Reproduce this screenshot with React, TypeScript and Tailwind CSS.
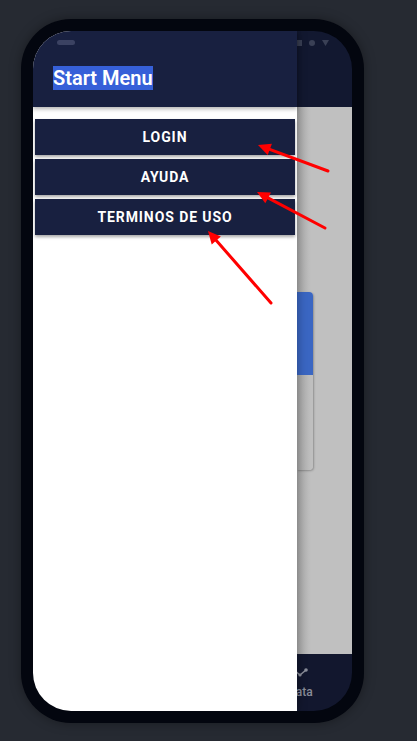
import React from "react";

const items = ["LOGIN", "AYUDA", "TERMINOS DE USO"];

function Arrow({ x1, y1, x2, y2 }: { x1: number; y1: number; x2: number; y2: number }) {
  // tail (x1,y1) -> tip (x2,y2)
  const a = Math.atan2(y2 - y1, x2 - x1);
  const len = 14;
  const w = 0.45;
  const p1 = [x2 - len * Math.cos(a - w), y2 - len * Math.sin(a - w)];
  const p2 = [x2 - len * Math.cos(a + w), y2 - len * Math.sin(a + w)];
  return (
    <g>
      <line x1={x1} y1={y1} x2={x2 - 6 * Math.cos(a)} y2={y2 - 6 * Math.sin(a)} stroke="#ff0000" strokeWidth={3} strokeLinecap="round" />
      <polygon points={`${x2},${y2} ${p1[0]},${p1[1]} ${p2[0]},${p2[1]}`} fill="#ff0000" />
    </g>
  );
}

export default function App() {
  return (
    <div className="relative w-[417px] h-[741px] bg-[#262a32] overflow-hidden font-['Roboto','Liberation_Sans',sans-serif]">
      <div className="pl-[21px] pt-[19px]">
        <div className="w-[343px] h-[704px] rounded-[50px] bg-[#03060f] p-[12px] shadow-[0_0_12px_rgba(0,0,0,0.35)]">
          <div className="flex h-full w-full rounded-[38px] overflow-hidden">
            {/* drawer */}
            <div className="flex flex-col w-[264px] bg-white shadow-[2px_0_8px_rgba(0,0,0,0.25)] z-10">
              <div className="h-[76px] bg-[#182040] shadow-[0_2px_4px_rgba(0,0,0,0.3)] pl-[20px] pt-[9px]">
                <div className="ml-[4px] w-[18px] h-[5px] rounded-full bg-[#3b4262]" />
                <div className="mt-[22px]">
                  <span className="bg-[#3660d8] text-white text-[20px] leading-[23px] font-semibold">Start Menu</span>
                </div>
              </div>
              <div className="flex flex-col gap-[4px] px-[2px] pt-[12px]">
                {items.map((t) => (
                  <div
                    key={t}
                    className="h-[36px] flex items-center justify-center bg-[#182040] text-white text-[14px] font-bold tracking-[0.065em] shadow-[0_2px_3px_rgba(0,0,0,0.35)]"
                  >
                    {t}
                  </div>
                ))}
              </div>
            </div>
            {/* content behind scrim */}
            <div className="flex flex-col flex-1 overflow-hidden">
              <div className="h-[76px] bg-[#121830] flex gap-[7px] items-start pt-[9px] -ml-[1px]">
                <div className="w-[6px] h-[6px] bg-[#3a4055]" />
                <div className="w-[6px] h-[6px] rounded-full bg-[#3a4055]" />
                <svg width="7" height="6" viewBox="0 0 7 6"><polygon points="0,0 7,0 3.5,6" fill="#3a4055" /></svg>
              </div>
              <div className="flex-1 bg-[linear-gradient(to_right,#a9a9a9,#c0c0c0_14px)] pt-[185px]">
                <div className="w-[16px] h-[178px] rounded-r-[4px] bg-[linear-gradient(to_right,#a6a6a6,#bfbfbf_14px)] shadow-[1px_1px_2px_rgba(0,0,0,0.25)] overflow-hidden">
                  <div className="h-[83px] bg-[#3a66c2]" />
                </div>
              </div>
              <div className="h-[57px] bg-[#12172e] flex flex-col pt-[14px]">
                <svg width="16" height="10" viewBox="0 0 16 10" className="-ml-[4px]">
                  <polyline points="1,2 7,7 13,2" fill="none" stroke="#8a8d99" strokeWidth="1.6" />
                  <circle cx="13" cy="2" r="1.8" fill="#8a8d99" />
                  <circle cx="7" cy="7" r="1.6" fill="#8a8d99" />
                </svg>
                <div className="mt-[7px] -ml-[9px] text-[12px] leading-[14px] text-[#8a8d99] font-medium whitespace-nowrap">Data</div>
              </div>
            </div>
          </div>
        </div>
      </div>
      <svg className="absolute left-0 top-0 z-20 pointer-events-none" width="417" height="741">
        <Arrow x1={328} y1={171} x2={258} y2={145} />
        <Arrow x1={325} y1={228} x2={257} y2={192} />
        <Arrow x1={271} y1={303} x2={208} y2={231} />
      </svg>
    </div>
  );
}
